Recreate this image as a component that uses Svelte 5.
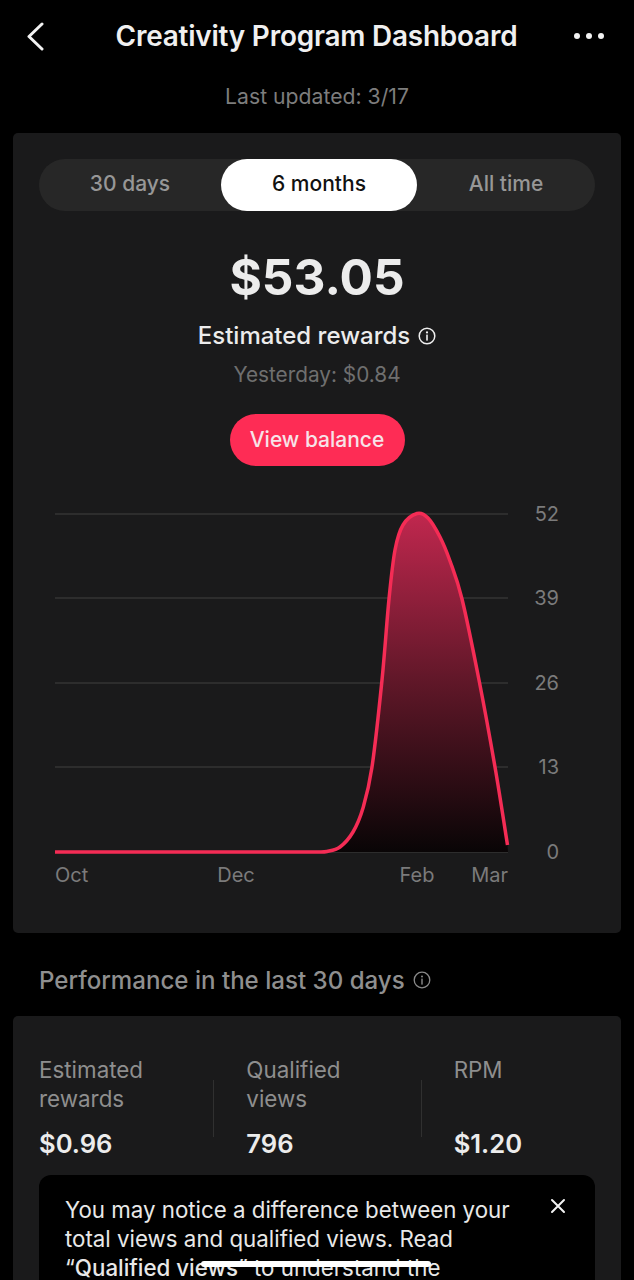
<script>
	let tabs = ["30 days", "6 months", "All time"];
	let active = "6 months";
	let gridLines = [
		{ y: 514, label: "52" },
		{ y: 598, label: "39" },
		{ y: 683, label: "26" },
		{ y: 767, label: "13" },
		{ y: 852, label: "0" }
	];
	let months = [
		{ x: 55, label: "Oct", anchor: "start" },
		{ x: 236, label: "Dec", anchor: "middle" },
		{ x: 417, label: "Feb", anchor: "middle" },
		{ x: 508, label: "Mar", anchor: "end" }
	];
	let stats = [
		{ label: "Estimated rewards", value: "$0.96" },
		{ label: "Qualified views", value: "796" },
		{ label: "RPM", value: "$1.20" }
	];

	// chart is drawn in page coords, the viewBox starts at the card's corner
	const pts = [
		[318, 852], [327, 851.5], [340, 847], [353, 832], [363, 808], [372, 767], [382, 680],
		[389, 599], [395, 550], [403, 525], [417, 513.5], [428, 518], [440, 537], [450, 561], [462, 599],
		[479, 680], [495, 767], [507.5, 845]
	];

	function smooth(points) {
		let d = "";
		for (let i = 0; i < points.length - 1; i++) {
			const p0 = points[i - 1] || points[i];
			const p1 = points[i];
			const p2 = points[i + 1];
			const p3 = points[i + 2] || p2;
			const c1x = p1[0] + (p2[0] - p0[0]) / 6;
			const c1y = p1[1] + (p2[1] - p0[1]) / 6;
			const c2x = p2[0] - (p3[0] - p1[0]) / 6;
			const c2y = p2[1] - (p3[1] - p1[1]) / 6;
			d += ` C${c1x} ${c1y} ${c2x} ${c2y} ${p2[0]} ${p2[1]}`;
		}
		return d;
	}
	const curve = smooth(pts);
	const linePath = `M55 852 L318 852${curve}`;
	const areaPath = `M318 852${curve} L508 852 Z`;
</script>

<div class="page">
	<header class="nav">
		<svg class="back" width="20" height="30" viewBox="0 0 20 30">
			<path d="M17 3 L4 15.5 L17 28" fill="none" stroke="#f2f2f2" stroke-width="3" stroke-linecap="round" stroke-linejoin="round" />
		</svg>
		<h1>Creativity Program Dashboard</h1>
		<div class="dots"><i></i><i></i><i></i></div>
	</header>
	<p class="updated">Last updated: 3/17</p>

	<section class="card main">
		<div class="tabs">
			{#each tabs as tab}
				<div class="tab" class:active={tab === active}>{tab}</div>
			{/each}
		</div>
		<div class="amount">$53.05</div>
		<div class="rewards">
			Estimated rewards
			<svg width="18" height="18" viewBox="0 0 18 18">
				<circle cx="9" cy="9" r="7.8" fill="none" stroke="#eee" stroke-width="1.5" />
				<circle cx="9" cy="5.4" r="1.1" fill="#eee" />
				<rect x="8.2" y="7.6" width="1.6" height="6" fill="#eee" />
			</svg>
		</div>
		<div class="yesterday">Yesterday: $0.84</div>
		<button class="balance">View balance</button>

		<svg class="chart" width="608" height="402" viewBox="13 490 608 402">
			<defs>
				<linearGradient id="fill" gradientUnits="userSpaceOnUse" x1="0" y1="514" x2="0" y2="852">
					<stop offset="0" stop-color="#c0274e" />
					<stop offset="0.5" stop-color="#5f1728" />
					<stop offset="1" stop-color="#090506" />
				</linearGradient>
			</defs>
			{#each gridLines as g}
				<line x1="55" x2="508" y1={g.y} y2={g.y} stroke="#414141" stroke-width="1" />
			{/each}
			<path d={areaPath} fill="url(#fill)" />
			<path d={linePath} fill="none" stroke="#f52c55" stroke-width="3.5" />
			{#each gridLines as g}
				<text class="axis" x="559" y={g.y + 7} text-anchor="end">{g.label}</text>
			{/each}
			{#each months as m}
				<text class="axis" x={m.x} y="882" text-anchor={m.anchor}>{m.label}</text>
			{/each}
		</svg>
	</section>

	<h2 class="perf">
		Performance in the last 30 days
		<svg width="18" height="18" viewBox="0 0 18 18">
			<circle cx="9" cy="9" r="7.8" fill="none" stroke="#8a8a8a" stroke-width="1.3" />
			<circle cx="9" cy="5.4" r="1" fill="#8a8a8a" />
			<rect x="8.3" y="7.6" width="1.4" height="6" fill="#8a8a8a" />
		</svg>
	</h2>

	<section class="card stats-card">
		<div class="stats">
			{#each stats as s}
				<div class="stat">
					<div class="stat-label">{s.label}</div>
					<div class="stat-value">{s.value}</div>
				</div>
			{/each}
		</div>
		<div class="notice">
			<p>You may notice a difference between your total views and qualified views. Read “<b>Qualified views</b>” to understand the</p>
			<svg class="close" width="16" height="16" viewBox="0 0 16 16">
				<path d="M2 2 L14 14 M14 2 L2 14" stroke="#f2f2f2" stroke-width="2" stroke-linecap="round" />
			</svg>
		</div>
	</section>

	<div class="home"></div>
</div>

<style>
	:global(body) {
		background: #000;
		overflow: hidden;
	}
	.page {
		position: relative;
		width: 634px;
		height: 1280px;
		overflow: hidden;
		background: #000;
		font-family: Inter, "Liberation Sans", sans-serif;
		color: #fff;
	}
	.nav {
		height: 72px;
		display: flex;
		align-items: center;
		justify-content: space-between;
		padding: 0 30px 0 25px;
	}
	.nav h1 {
		margin: 0 0 0 14px;
		font-size: 27.9px;
		font-weight: 600;
		letter-spacing: -0.2px;
		color: #f0f0f0;
	}
	.back {
		display: block;
	}
	.dots {
		display: flex;
		gap: 6px;
	}
	.dots i {
		width: 6px;
		height: 6px;
		border-radius: 50%;
		background: #f2f2f2;
	}
	.updated {
		margin: 12px 0 25px;
		height: 24px;
		line-height: 24px;
		text-align: center;
		font-size: 21.2px;
		color: #7d7d7d;
	}
	.card {
		margin: 0 13px;
		background: #1a1a1b;
		border-radius: 5px;
	}
	.main {
		height: 800px;
		padding-top: 26px;
		box-sizing: border-box;
		display: flex;
		flex-direction: column;
		align-items: center;
	}
	.tabs {
		width: 556px;
		height: 52px;
		display: grid;
		grid-template-columns: 182px 196px 178px;
		background: #272727;
		border-radius: 26px;
		font-size: 21px;
		line-height: 50px;
	}
	.tab {
		text-align: center;
		color: #979797;
		font-weight: 500;
	}
	.tab.active {
		background: #fff;
		color: #111;
		border-radius: 26px;
	}
	.amount {
		margin-top: 34px;
		font-size: 49.5px;
		line-height: 64px;
		font-weight: 700;
		color: #ececec;
	}
	.rewards {
		margin-top: 12px;
		font-size: 24px;
		line-height: 30px;
		font-weight: 500;
		color: #ececec;
		display: flex;
		align-items: center;
		gap: 8px;
	}
	.yesterday {
		margin-top: 11px;
		font-size: 20.8px;
		line-height: 26px;
		color: #6f6f6f;
	}
	.balance {
		margin-top: 26px;
		width: 175px;
		height: 52px;
		border: none;
		border-radius: 26px;
		background: #fe2c55;
		color: #f7e3e8;
		font: 500 21px/50px Inter, "Liberation Sans", sans-serif;
		padding: 0;
	}
	.chart {
		display: block;
		margin-top: 24px;
		flex: none;
	}
	.axis {
		font-size: 20px;
		fill: #7b7b7b;
	}
	.perf {
		margin: 31px 39px 0;
		height: 32px;
		display: flex;
		align-items: center;
		gap: 8px;
		font-size: 24.1px;
		font-weight: 500;
		color: #8f8f8f;
	}
	.stats-card {
		margin-top: 20px;
		padding: 39px 26px 0;
	}
	.stats {
		display: grid;
		grid-template-columns: repeat(3, 1fr);
		width: 622px;
	}
	.stat {
		position: relative;
		height: 120px;
		display: flex;
		flex-direction: column;
	}
	.stat + .stat::before {
		content: "";
		position: absolute;
		left: -33px;
		top: 25px;
		height: 57px;
		width: 1px;
		background: #303030;
	}
	.stat-label {
		width: 130px;
		height: 58px;
		font-size: 22.4px;
		line-height: 29px;
		color: #8e8e8e;
	}
	.stat-value {
		margin-top: 15px;
		font-size: 25.6px;
		line-height: 32px;
		font-weight: 600;
		color: #ececec;
	}
	.notice {
		position: relative;
		background: #000;
		border-radius: 12px;
		padding: 20px 66px 20px 26px;
	}
	.notice p {
		margin: 0;
		font-size: 22.3px;
		line-height: 29px;
		color: #e8e8e8;
	}
	.notice b {
		font-weight: 500;
	}
	.close {
		position: absolute;
		top: 23px;
		right: 29px;
	}
	.home {
		position: absolute;
		left: 201px;
		top: 1261px;
		width: 230px;
		height: 6px;
		border-radius: 3px;
		background: #fff;
	}
</style>
